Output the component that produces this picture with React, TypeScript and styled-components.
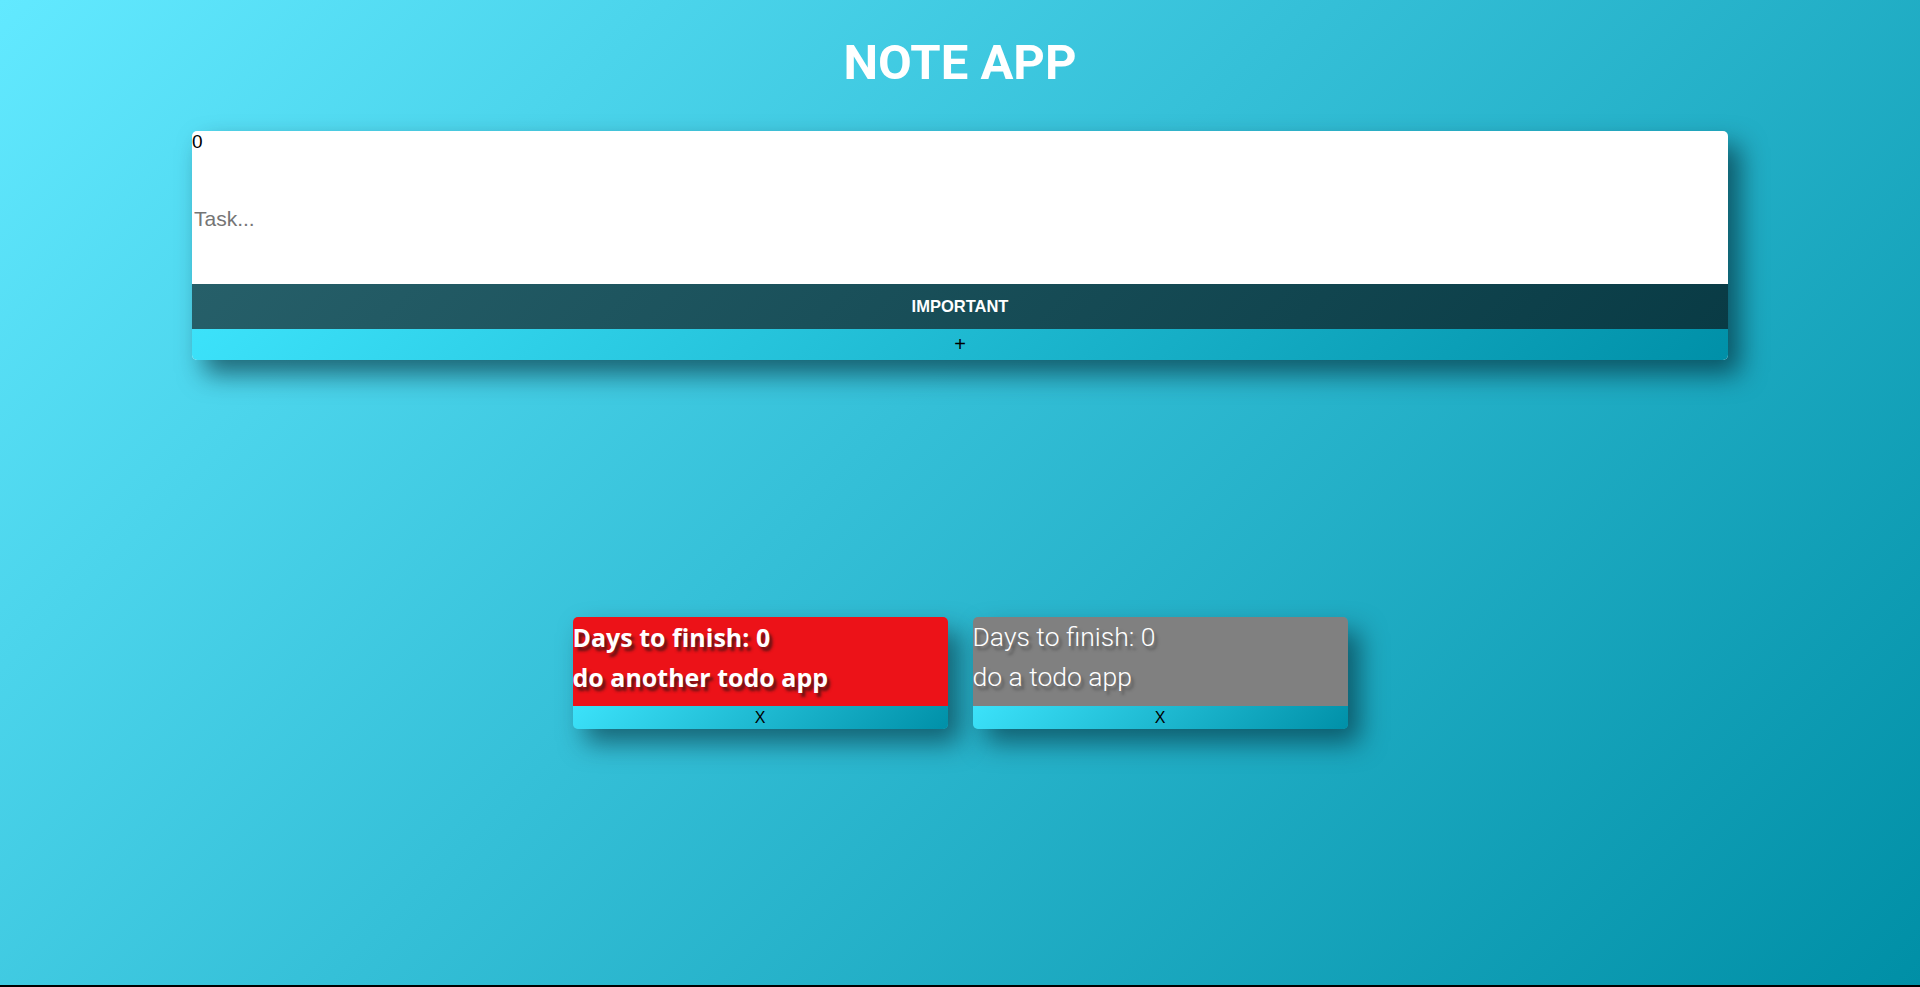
import React from "react";
import styled, { createGlobalStyle } from "styled-components";

const Global = createGlobalStyle`
  html { background: #000; }
  body { margin: 0; font-family: "Liberation Sans", Arial, sans-serif; }
`;

const Page = styled.div`
  height: 985px;
  background: linear-gradient(135deg, #62e9ff 0%, #35c0d8 45%, #008fa6 100%);
  display: flex;
  flex-direction: column;
  align-items: center;
  overflow: hidden;
`;

const Title = styled.h1`
  margin: 34px 0 0;
  font-family: Roboto, sans-serif;
  font-weight: 700;
  font-size: 49px;
  letter-spacing: 0;
  color: #fff;
  line-height: 58px;
`;

const Form = styled.div`
  margin-top: 39px;
  width: 80%;
  background: #fff;
  border-radius: 5px;
  box-shadow: 12px 14px 26px rgba(0, 30, 40, 0.6);
  display: flex;
  flex-direction: column;
  overflow: hidden;
`;

const Counter = styled.div`
  font-family: "Liberation Sans", Arial, sans-serif;
  font-size: 19px;
  line-height: 22px;
  color: #000;
`;

const TaskInput = styled.input`
  height: 131px;
  border: none;
  outline: none;
  padding: 0 2px;
  font-family: "Liberation Sans", Arial, sans-serif;
  font-size: 21px;
  background: transparent;
  &::placeholder { color: #757575; }
`;

const ImportantBtn = styled.button`
  height: 45px;
  border: none;
  background: linear-gradient(135deg, #265f69, #093b45);
  color: #fff;
  font-family: "Liberation Sans", Arial, sans-serif;
  font-weight: 700;
  font-size: 16.5px;
  cursor: pointer;
`;

const CyanBar = styled.button<{ $h: number; $size: number }>`
  height: ${(p) => p.$h}px;
  border: none;
  padding: 0;
  background: linear-gradient(135deg, #3ce2fa, #0090a8);
  color: #000;
  font-family: "Liberation Sans", Arial, sans-serif;
  font-size: ${(p) => p.$size}px;
  line-height: ${(p) => p.$h}px;
  cursor: pointer;
`;

const Cards = styled.div`
  margin-top: 257px;
  display: flex;
  gap: 25px;
  justify-content: center;
`;

const Card = styled.div`
  width: 375px;
  border-radius: 5px;
  overflow: hidden;
  display: flex;
  flex-direction: column;
  box-shadow: 12px 14px 26px rgba(0, 30, 40, 0.55);
`;

const CardBody = styled.div<{ $important: boolean }>`
  height: 89px;
  background: ${(p) => (p.$important ? "#ec1218" : "#808080")};
  color: #fff;
  font-family: ${(p) => (p.$important ? '"Open Sans"' : "Roboto")}, sans-serif;
  font-size: ${(p) => (p.$important ? 25 : 26.5)}px;
  line-height: 40px;
  font-weight: ${(p) => (p.$important ? 700 : 300)};
  text-shadow: ${(p) =>
    p.$important ? "3px 4px 3px rgba(80, 20, 20, 0.9)" : "3px 4px 3px rgba(60, 60, 60, 0.6)"};
`;

const Line = styled.div`
  white-space: nowrap;
`;

const todos = [
  { text: "do another todo app", days: 0, important: true },
  { text: "do a todo app", days: 0, important: false },
];

export default function App() {
  return (
    <>
      <Global />
      <Page>
        <Title>NOTE APP</Title>
        <Form>
          <Counter>0</Counter>
          <TaskInput placeholder="Task..." />
          <ImportantBtn>IMPORTANT</ImportantBtn>
          <CyanBar $h={31} $size={20}>+</CyanBar>
        </Form>
        <Cards>
          {todos.map((t) => (
            <Card key={t.text}>
              <CardBody $important={t.important}>
                <Line>Days to finish: {t.days}</Line>
                <Line>{t.text}</Line>
              </CardBody>
              <CyanBar $h={23} $size={16}>X</CyanBar>
            </Card>
          ))}
        </Cards>
      </Page>
    </>
  );
}
